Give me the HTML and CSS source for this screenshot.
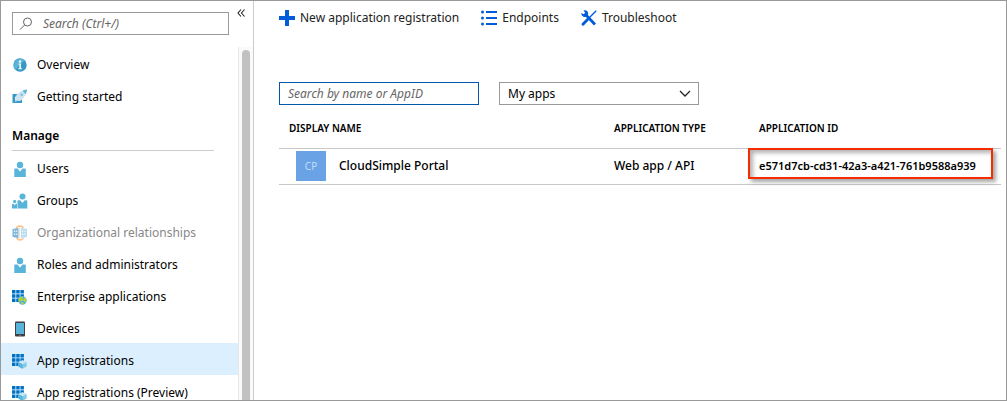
FILE: index.html
```html
<!DOCTYPE html>
<html lang="en">
<head>
<meta charset="utf-8">
<title>App registrations</title>
<link rel="stylesheet" href="styles.css">
</head>
<body>
<svg class="defs" aria-hidden="true">
  <symbol id="user" viewBox="0 0 16 16"><circle cx="8" cy="4" r="3.2" fill="#59b4d9"/><path d="M3 7.5h2.5L8 10.6l2.5-3.1H13q.8 0 .8 1V16H2.300V8.500q0-1 .7-1z" fill="#59b4d9"/></symbol>
  <symbol id="grid" viewBox="0 0 16 16"><path d="M0 1h3.500v3.500H0zM4.200 1h3.500v3.500H4.200zM8.400 1h3.500v3.500H8.400zM0 5.200h3.500v3.500H0zM4.200 5.200h3.500v3.500H4.200zM8.400 5.200h3.500v3.500H8.400zM0 9.400h3.500v3.500H0zM4.200 9.400h3.500v3.500H4.200z" fill="#0072c6"/></symbol>
  <symbol id="app" viewBox="0 0 16 16"><use href="#grid"/><path d="M10.500 7.200l4.200 2v4.300l-4.200 2.300-4.200-2.300V9.200z" fill="#84c9e8"/><path d="M10.500 7.200l4.200 2-4.200 2-4.200-2z" fill="#c5e6f4"/><path d="M10.500 11.200v4.600l-4.200-2.300V9.200z" fill="#59b4d9"/></symbol>
</svg>
<div class="frame">
  <aside class="sidebar">
    <div class="side-top">
      <label class="side-search">
        <svg class="lens" viewBox="0 0 14 14" aria-hidden="true"><circle cx="8.500" cy="5" r="4" fill="none" stroke="#666"/><path d="M5.600 8L1 12.600" stroke="#666"/></svg>
        <input type="search" placeholder="Search (Ctrl+/)" aria-label="Search menu">
      </label>
      <button class="collapse" aria-label="Collapse menu"><svg viewBox="0 0 8 8" aria-hidden="true"><path d="M4 .5L1 4l3 3.500M7.500 .5l-3 3.500 3 3.500" fill="none" stroke="#222" stroke-width="1.100"/></svg></button>
    </div>
    <div class="side-body">
      <nav class="menu">
        <a class="item" href="#"><svg class="icon" viewBox="0 0 16 16"><circle cx="8" cy="8" r="6.700" fill="#3999c6"/><path d="M3.300 12.700A6.700 6.700 0 0 1 12.700 3.300z" fill="#59b4d9"/><circle cx="8" cy="4.500" r="1.200" fill="#fff"/><path d="M6.500 6.500h2.400v4.700h1v1H6.400v-1h1V7.500h-.9z" fill="#fff"/></svg>Overview</a>
        <a class="item" href="#"><svg class="icon" viewBox="0 0 16 16"><path d="M.5 5h5v2L3 8v3.500h6L10 9.500V14H.5z" fill="#3999c6"/><path d="M3 9.500C4 5 9 1 15 .5 15 6 10.500 10.500 6.500 12z" fill="#cfe4ef"/><path d="M10.500 2Q12.500 .8 15 .5q-.2 2.500-1.500 4.500z" fill="#59b4d9"/><circle cx="9.700" cy="5.800" r="1.400" fill="#7fc3e0"/><path d="M2.700 13l1-3 2 2z" fill="#a5d5ea"/></svg>Getting started</a>
        <h2 class="group">Manage</h2>
        <a class="item" href="#"><svg class="icon"><use href="#user"/></svg>Users</a>
        <a class="item" href="#"><svg class="icon" viewBox="0 0 16 16"><g fill="#59b4d9"><circle cx="10.500" cy="3.500" r="3"/><path d="M6 7.200h2.200l2.300 2.900 2.300-2.900H14.500q.8 0 .8 1V15.500H5.500V8.200q0-1 .5-1z"/><circle cx="2.700" cy="8.400" r="1.600"/><path d="M0 10.700h1.500l1.200 1.500 1.200-1.500H5v4.800H0z"/></g></svg>Groups</a>
        <a class="item muted" href="#"><svg class="icon" viewBox="0 0 16 16"><path d="M4 3.500Q5 1 8 1q2.500 0 3.500 2M4.500 12.500Q5.500 15 8 15q2.500 0 3.500-2" fill="none" stroke="#f9bd82" stroke-width="1.300"/><path d="M.5 4l6-1v10l-6-1z" fill="#7fb7dc"/><path d="M9 3l6 1v8l-6 1z" fill="#b9dff0"/><path d="M2 5.500h1.200V7H2zM4.200 5.500h1.200V7H4.200zM2 8.500h1.200V10H2zM4.200 8.500h1.200V10H4.200zM10 5.500h1.200V7H10zM12.400 5.500h1.200V7h-1.200zM10 8.500h1.200V10H10zM12.400 8.500h1.200V10h-1.200z" fill="#e9f6fb"/><path d="M7.700 2.500v11" stroke="#fbd0a5" stroke-width=".8"/></svg>Organizational relationships</a>
        <a class="item" href="#"><svg class="icon"><use href="#user"/></svg>Roles and administrators</a>
        <a class="item" href="#"><svg class="icon" viewBox="0 0 16 16"><use href="#grid"/><circle cx="10.500" cy="11.500" r="4.200" fill="#59b4d9"/><path d="M7 9.500q2-2.500 4-2l-1 2 1.500 1-1.500 1.500-1.500-.5-1 1.500-1-1zM12 8.500l2 1 .5 2.500-2 1-1-1.500zM8.500 13.500l2-.5 1.500 1.500-1.500 1z" fill="#b8d432"/></svg>Enterprise applications</a>
        <a class="item" href="#"><svg class="icon" viewBox="0 0 16 16"><rect x="3" y=".5" width="10" height="15" rx="1" fill="#3e4045"/><path d="M4 2h8v11H4z" fill="#59b4d9"/><circle cx="8" cy="14.300" r=".6" fill="#aaa"/></svg>Devices</a>
        <a class="item selected" href="#" aria-current="page"><svg class="icon"><use href="#app"/></svg>App registrations</a>
        <a class="item" href="#"><svg class="icon"><use href="#app"/></svg>App registrations (Preview)</a>
      </nav>
      <div class="track"><div class="thumb"></div></div>
    </div>
  </aside>
  <main class="main">
    <div class="toolbar">
      <button class="command"><svg class="icon" viewBox="0 0 16 16"><path d="M6 0h4v6h6v4h-6v6H6v-6H0V6h6z" fill="#015cda"/></svg>New application registration</button>
      <button class="command"><svg class="icon" viewBox="0 0 16 16"><path d="M5 1h11v2H5zM5 7h11v2H5zM5 13h11v2H5z" fill="#015cda"/><g fill="#015cda"><circle cx="1.500" cy="2" r="1.500"/><circle cx="1.500" cy="8" r="1.500"/><circle cx="1.500" cy="14" r="1.500"/></g></svg>Endpoints</button>
      <button class="command"><svg class="icon" viewBox="0 0 16 16"><path d="M4.500 4.500L14 14.500" stroke="#015cda" stroke-width="2.800"/><path d="M2.500 .4A3.400 3.400 0 1 1 .4 3l2.300 1.300L4.200 2.700z" fill="#015cda"/><path d="M15.200 .7L7.500 8.500" stroke="#015cda" stroke-width="1.300"/><path d="M6.500 9.500L2 14.200" stroke="#015cda" stroke-width="2.800" stroke-linecap="round"/></svg>Troubleshoot</button>
    </div>
    <div class="filters">
      <input class="field name-filter" type="text" placeholder="Search by name or AppID" aria-label="Search by name or AppID">
      <div class="select-wrap">
        <select class="field" aria-label="Applications shown"><option>My apps</option></select>
        <svg class="chevron" viewBox="0 0 12 8" aria-hidden="true"><path d="M1 1l5 5 5-5" fill="none" stroke="#222" stroke-width="1.300"/></svg>
      </div>
    </div>
    <table class="apps">
      <colgroup><col><col class="col-type"><col class="col-id"></colgroup>
      <thead><tr><th class="name-head">DISPLAY NAME</th><th>APPLICATION TYPE</th><th>APPLICATION ID</th></tr></thead>
      <tbody><tr>
        <td><div class="app-name"><span class="tile">CP</span>CloudSimple Portal</div></td>
        <td>Web app / API</td>
        <td class="id-cell">e571d7cb-cd31-42a3-a421-761b9588a939<span class="callout"></span></td>
      </tr></tbody>
    </table>
  </main>
</div>
</body>
</html>
```
FILE: styles.css
```css
* { box-sizing: border-box; }
body { margin: 0; font: 12px/16px "Noto Sans", "Open Sans", sans-serif; color: #000; background: #fff; }
button, input, select { font: inherit; color: inherit; }
.defs { position: absolute; width: 0; height: 0; }
.frame { display: flex; height: 100vh; border: 1px solid #999; overflow: hidden; }
.icon { width: 16px; height: 16px; flex: none; }

.sidebar { display: flex; flex-direction: column; flex: none; width: 253px; border-right: 1px solid #ccc; }
.side-top { display: flex; align-items: flex-start; gap: 8px; flex: none; height: 46px; padding: 11px 0 0 11px; }
.side-search { display: flex; align-items: center; width: 217px; height: 23px; padding-left: 6px; gap: 10px; border: 1px solid #999; }
.lens { width: 14px; height: 14px; flex: none; }
.side-search input { flex: 1; min-width: 0; padding: 0; border: 0; outline: 0; background: none; }
input::placeholder { font-style: italic; color: #666; opacity: 1; }
.collapse { display: flex; width: 8px; padding: 0; border: 0; background: none; margin-top: -3px; }
.collapse svg { width: 8px; height: 8px; }
.side-body { display: flex; flex: 1; min-height: 0; }
.menu { flex: 1; overflow: hidden; }
.item { display: flex; align-items: center; gap: 9px; height: 32px; padding: 4px 0 0 11px; color: #000; text-decoration: none; white-space: nowrap; }
.muted { color: #888; }
.selected { background: #dcefff; }
.group { height: 40px; margin: 0 24px 0 11px; padding-top: 17px; border-bottom: 1px solid #ccc; font-size: 12px; font-weight: 600; }
.track { width: 15px; padding: 3px 3px 0; background: #fafafa; border-left: 1px solid #e8e8e8; }
.thumb { width: 8px; height: 100%; border-radius: 4px 4px 0 0; background: #c1c1c1; }

.main { flex: 1; min-width: 0; padding: 0 5px 0 25px; }
.toolbar { display: flex; gap: 22px; padding-top: 8px; }
.command { display: flex; align-items: center; gap: 5px; padding: 0; border: 0; background: none; line-height: 18px; color: #222; white-space: nowrap; }
.filters { display: flex; gap: 20px; padding-top: 55px; }
.field { width: 200px; height: 23px; padding: 0 8px; border: 1px solid #999; border-radius: 0; background: #fff; appearance: none; outline: 0; }
.name-filter { border-color: #0058ad; }
.select-wrap { position: relative; display: flex; }
.chevron { position: absolute; right: 8px; top: 8px; width: 12px; height: 8px; pointer-events: none; }
.apps { width: 100%; margin-top: 3px; border-collapse: collapse; table-layout: fixed; }
.col-type { width: 145px; }
.col-id { width: 242px; }
.apps th { height: 40px; padding: 0; border-bottom: 1px solid #c8c8c8; font-size: 10px; font-weight: 600; text-align: left; }
.apps .name-head { padding-left: 10px; }
.apps td { height: 36px; padding: 0; border-bottom: 1px solid #c8c8c8; font-weight: 500; white-space: nowrap; }
.app-name { display: flex; align-items: center; gap: 13px; padding-left: 17px; }
.tile { display: grid; place-items: center; width: 30px; height: 30px; background: #69a3e6; color: #c3dcf7; font-size: 10px; font-weight: 400; }
.apps .id-cell { position: relative; font-size: 11px; font-weight: 600; }
.callout { position: absolute; inset: -1px 8px 5px -11px; border: 2px solid #f62c00; box-shadow: 3px 3px 4px rgba(0,0,0,.35), inset 3px 3px 4px rgba(0,0,0,.3); }
```
